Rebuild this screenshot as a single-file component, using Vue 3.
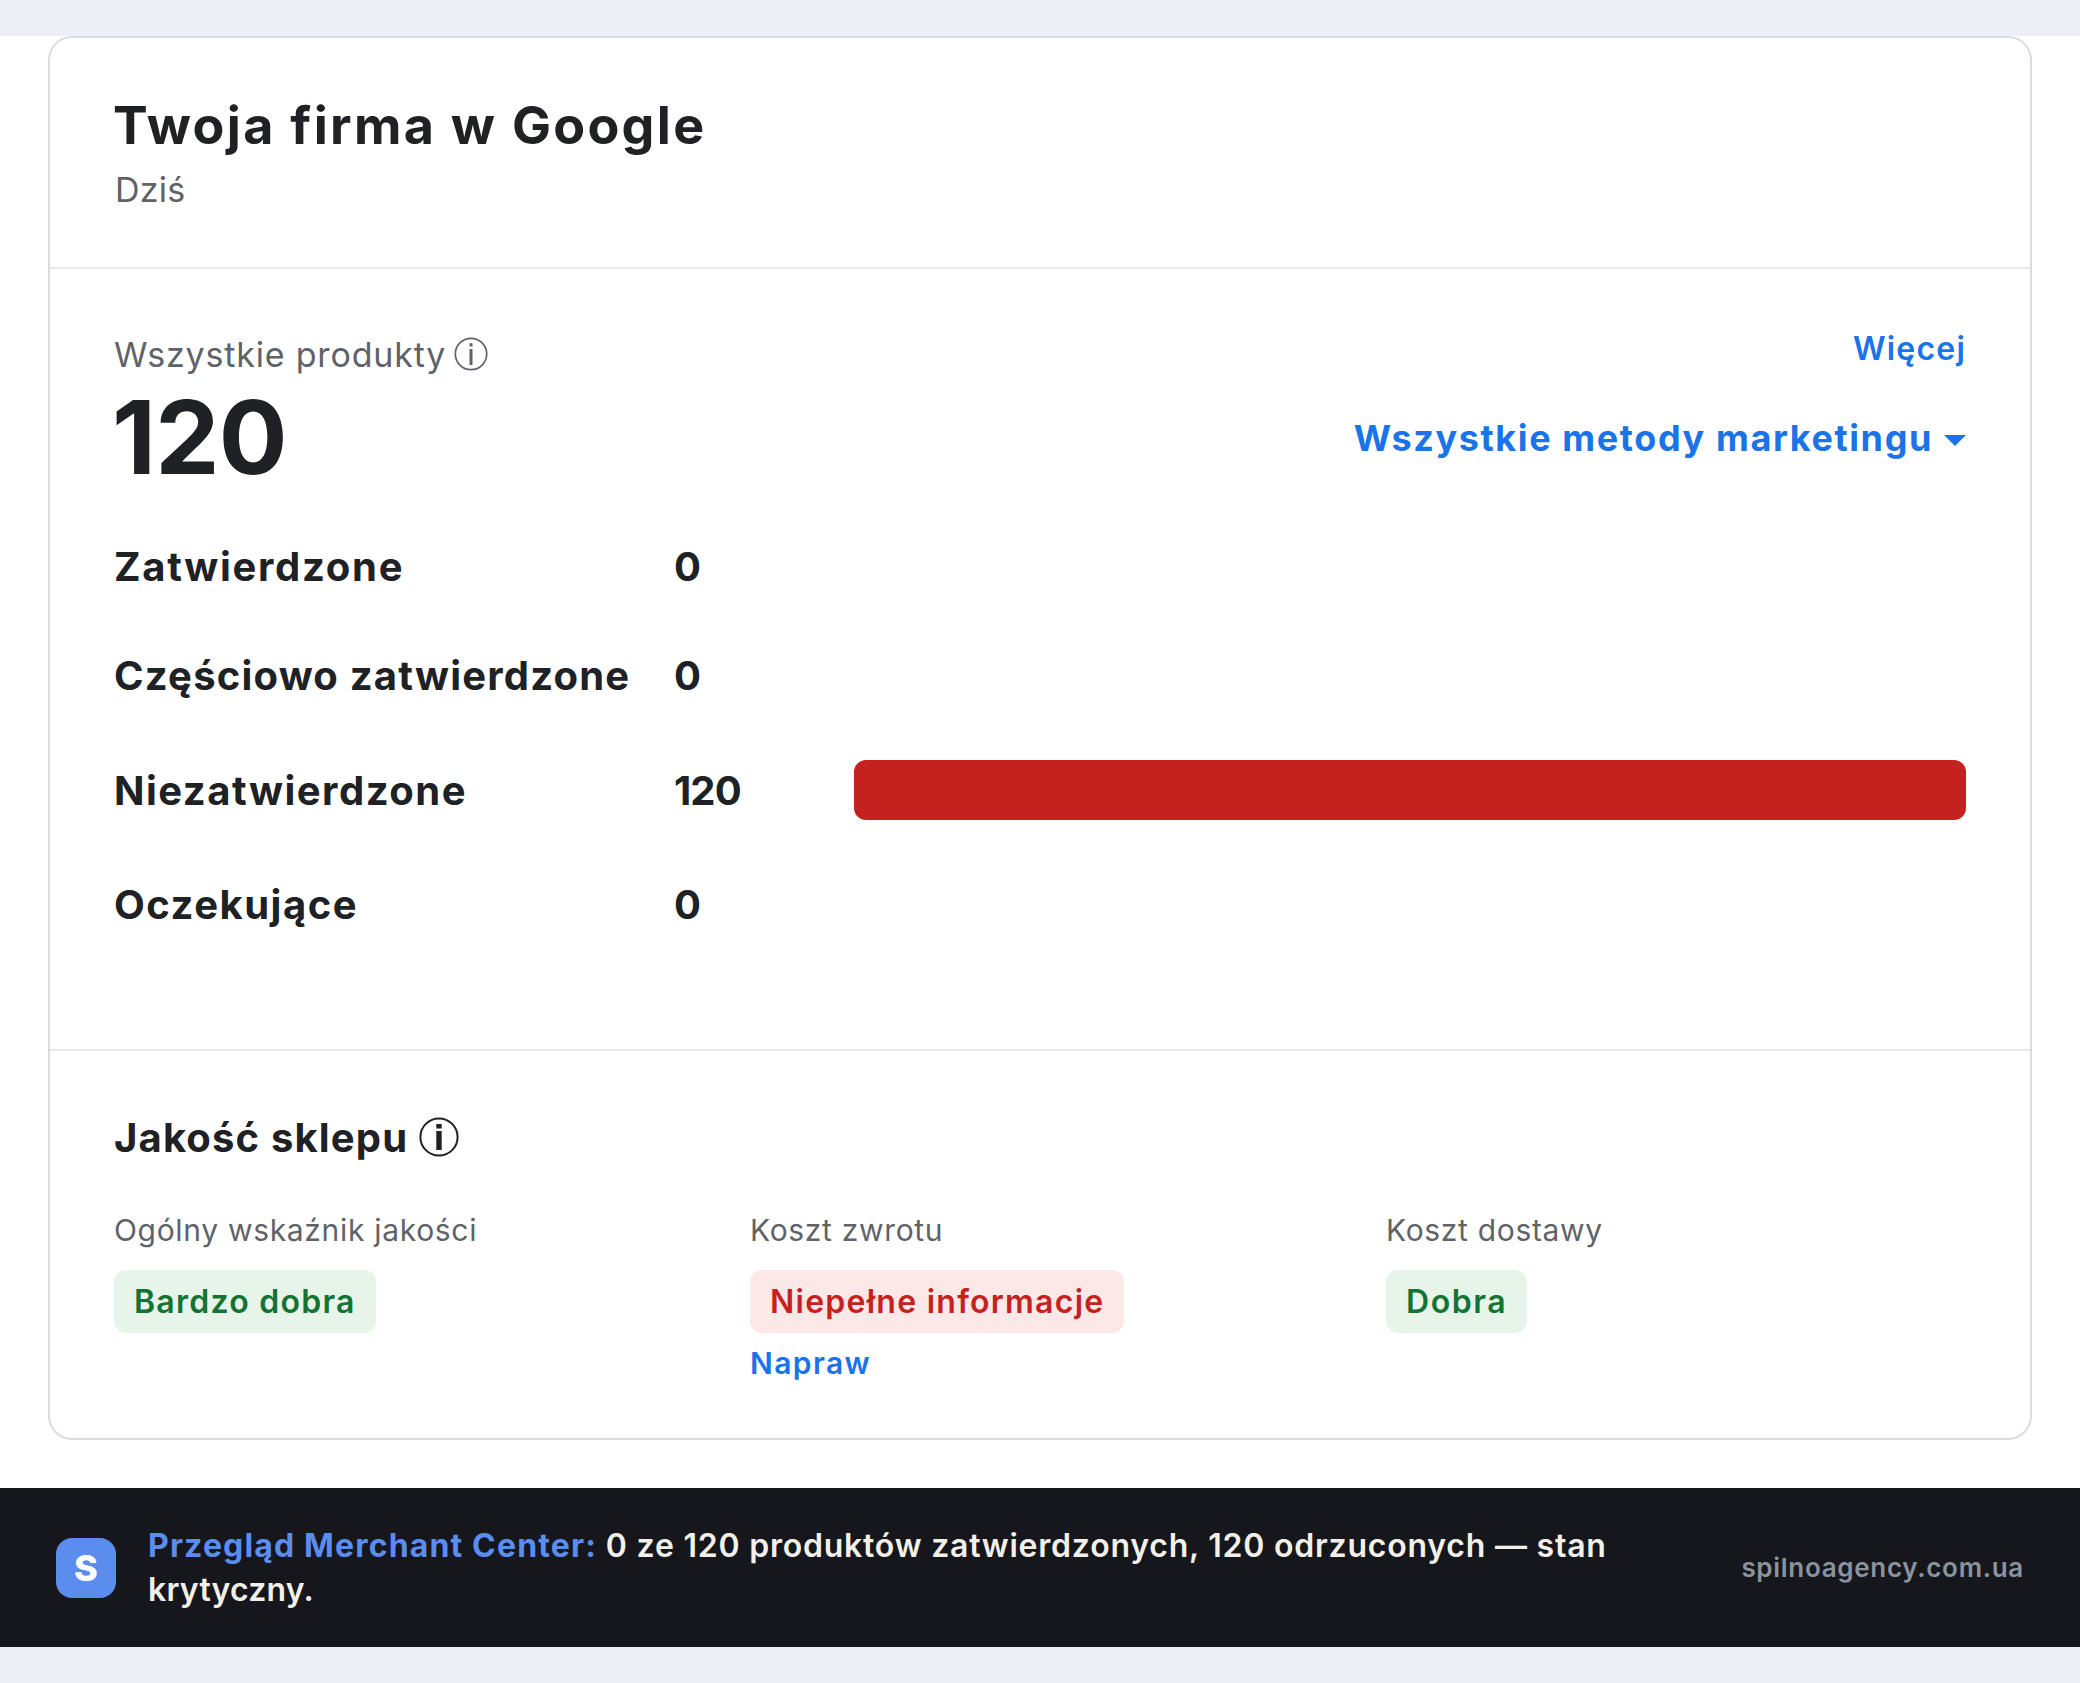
<script setup>
import { ref } from 'vue';

const rows = ref([
  { id: 'approved', label: 'Zatwierdzone', value: 0 },
  { id: 'limited', label: 'Częściowo zatwierdzone', value: 0 },
  { id: 'disapproved', label: 'Niezatwierdzone', value: 120 },
  { id: 'pending', label: 'Oczekujące', value: 0 }
]);

const total = 120;

const metrics = ref([
  { id: 'overall', label: 'Ogólny wskaźnik jakości', status: 'Bardzo dobra', tone: 'good' },
  { id: 'returns', label: 'Koszt zwrotu', status: 'Niepełne informacje', tone: 'bad', action: 'Napraw' },
  { id: 'delivery', label: 'Koszt dostawy', status: 'Dobra', tone: 'good' }
]);
</script>

<template>
  <div class="page">
    <main class="sheet">
      <div class="card">
        <header class="card-head">
          <h1 class="title">Twoja firma w Google</h1>
          <p class="date">Dziś</p>
        </header>

        <section class="products">
          <div class="summary">
            <div class="summary-left">
              <div class="summary-label">
                <span>Wszystkie produkty</span>
                <svg class="info info-small" viewBox="0 0 34 34" fill="none">
                  <circle cx="17" cy="17" r="15.7" stroke="currentColor" stroke-width="1.7" />
                  <path d="M17 6.2v3.2M17 12v16" stroke="currentColor" stroke-width="3" />
                </svg>
              </div>
              <div class="total">{{ total }}</div>
            </div>
            <div class="summary-right">
              <a class="more">Więcej</a>
              <a class="methods"><span>Wszystkie metody marketingu</span><i class="caret"></i></a>
            </div>
          </div>

          <div class="rows">
            <div v-for="row in rows" :key="row.id" class="row" :class="row.id">
              <span class="row-label">{{ row.label }}</span>
              <span class="row-value">{{ row.value }}</span>
              <div v-if="row.value" class="track">
                <div class="bar" :style="{ width: (row.value / total) * 100 + '%' }"></div>
              </div>
            </div>
          </div>
        </section>

        <section class="quality">
          <h2 class="quality-title">
            <span>Jakość sklepu</span>
            <svg class="info info-large" viewBox="0 0 40 40" fill="none">
              <circle cx="20" cy="20" r="18.6" stroke="currentColor" stroke-width="2" />
              <path d="M20 7v4.4M20 14v19" stroke="currentColor" stroke-width="5.4" />
            </svg>
          </h2>
          <div class="metrics">
            <div v-for="metric in metrics" :key="metric.id" class="metric" :class="metric.id">
              <span class="metric-label">{{ metric.label }}</span>
              <span class="chip" :class="metric.tone">{{ metric.status }}</span>
              <a v-if="metric.action" class="fix">{{ metric.action }}</a>
            </div>
          </div>
        </section>
      </div>
    </main>

    <footer class="footer">
      <div class="logo">S</div>
      <p class="caption">
        <b>Przegląd Merchant Center:</b> 0 ze 120 produktów zatwierdzonych, 120 odrzuconych — stan
        <span class="caption-end">krytyczny.</span>
      </p>
      <span class="site">spilnoagency.com.ua</span>
    </footer>
  </div>
</template>

<style>
body {
  margin: 0;
  background: #eeeff4;
}
</style>

<style scoped>
.page {
  box-sizing: border-box;
  height: 1683px;
  padding: 36px 0;
  background: #eeeff4;
  color: #202124;
  font-family: Inter, "Open Sans", sans-serif;
  white-space: nowrap;
}

.sheet {
  padding: 0 48px 48px;
  background: #fff;
}

.card {
  box-sizing: border-box;
  height: 1404px;
  border: 2px solid #dadce0;
  border-radius: 24px;
}

.card-head {
  padding: 56px 64px 55px;
  border-bottom: 2px solid #e8eaed;
}

.title {
  margin: 0 0 0 -1px;
  font-size: 52px;
  font-weight: 700;
  line-height: 64px;
  letter-spacing: 2.3px;
}

.date {
  margin: 10px 0 0 1px;
  color: #5f6368;
  font-size: 34px;
  line-height: 44px;
  letter-spacing: 0.2px;
}

.products {
  padding: 58px 64px 120px;
  border-bottom: 2px solid #e8eaed;
}

.summary {
  display: flex;
  justify-content: space-between;
}

.summary-left {
  padding-top: 6px;
}

.summary-label {
  display: flex;
  align-items: center;
  gap: 8px;
  color: #5f6368;
  font-size: 34px;
  line-height: 44px;
  letter-spacing: 0.82px;
}

.info {
  display: block;
  flex: none;
}

.info-small {
  width: 34px;
  height: 34px;
  margin-top: -2px;
}

.info-large {
  width: 40px;
  height: 40px;
  margin-top: -2px;
}

.total {
  height: 100px;
  margin: 11px 0 0 -2px;
  font-size: 102px;
  font-weight: 700;
  line-height: 99px;
  letter-spacing: -0.8px;
}

.summary-right {
  display: flex;
  flex-direction: column;
  align-items: flex-end;
  color: #1a73e8;
  line-height: 44px;
}

.more {
  font-size: 32px;
  font-weight: 600;
  letter-spacing: 1.2px;
}

.methods {
  display: flex;
  align-items: center;
  gap: 11px;
  margin-top: 45px;
  font-size: 36px;
  font-weight: 700;
  letter-spacing: 1.6px;
}

.caret {
  margin-top: 5px;
  border: 11px solid transparent;
  border-top-color: currentColor;
  border-bottom: 0;
}

.rows {
  display: flex;
  flex-direction: column;
  gap: 60px;
  margin-top: 54px;
}

.row {
  display: grid;
  grid-template-columns: 560px 180px 1fr;
  align-items: center;
  min-height: 49px;
  font-size: 40px;
  font-weight: 700;
  line-height: 49px;
  letter-spacing: 1.5px;
}

.row.approved {
  letter-spacing: 1.7px;
}

.row.limited {
  letter-spacing: 1.2px;
}

.row .row-value {
  letter-spacing: -0.9px;
}

.track {
  height: 60px;
}

.bar {
  height: 100%;
  border-radius: 12px;
  background: #c5221f;
}

.quality {
  padding: 62px 64px 0;
}

.quality-title {
  display: flex;
  align-items: center;
  gap: 11px;
  margin: 0;
  font-size: 40px;
  font-weight: 700;
  line-height: 50px;
  letter-spacing: 1.15px;
}

.metrics {
  display: grid;
  grid-template-columns: repeat(3, 1fr);
  gap: 56px;
  margin-top: 48px;
}

.metric {
  display: flex;
  flex-direction: column;
  align-items: flex-start;
}

.metric-label {
  color: #5f6368;
  font-size: 30px;
  line-height: 38px;
  letter-spacing: 0.68px;
}

.chip {
  margin-top: 21px;
  padding: 0 20px;
  border-radius: 12px;
  font-size: 32px;
  font-weight: 600;
  line-height: 63px;
  letter-spacing: 1.25px;
}

.delivery .chip {
  letter-spacing: 1.6px;
}

.good {
  background: #e6f4ea;
  color: #137333;
}

.bad {
  background: #fce8e6;
  color: #c5221f;
}

.fix {
  margin-top: 10px;
  color: #1a73e8;
  font-size: 30px;
  font-weight: 600;
  line-height: 40px;
  letter-spacing: 1.4px;
}

.footer {
  display: flex;
  align-items: center;
  box-sizing: border-box;
  height: 159px;
  padding: 0 56px;
  background: #15171c;
}

.logo {
  flex: none;
  width: 60px;
  height: 60px;
  border-radius: 16px;
  background: #5b8def;
  color: #fff;
  font-size: 36px;
  font-weight: 800;
  line-height: 60px;
  text-align: center;
}

.caption {
  flex: none;
  width: 1490px;
  margin: 0 0 0 32px;
  color: #f2f0e9;
  font-size: 32px;
  font-weight: 600;
  line-height: 44px;
  letter-spacing: 0.78px;
  white-space: normal;
}

.caption b {
  color: #5b8def;
  font-weight: 700;
  letter-spacing: 1.15px;
}

.caption-end {
  letter-spacing: 0.2px;
}

.site {
  margin-left: auto;
  color: #8b939e;
  font-size: 26px;
  font-weight: 600;
  letter-spacing: 0.7px;
}
</style>
